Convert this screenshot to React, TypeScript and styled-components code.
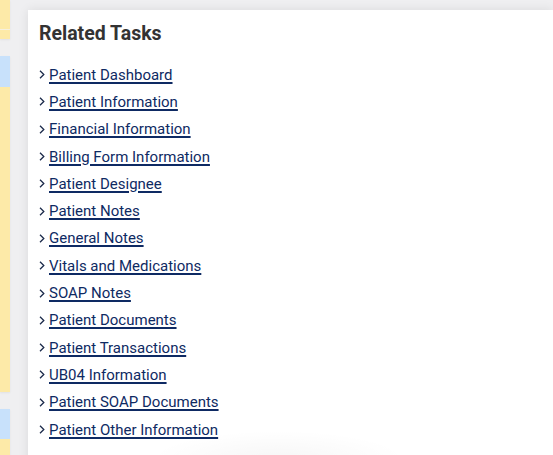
import React from 'react';
import styled, { createGlobalStyle } from 'styled-components';

const GlobalStyle = createGlobalStyle`
  html, body {
    margin: 0;
    padding: 0;
    background: #efeff1;
    font-family: Roboto, "Liberation Sans", Arial, sans-serif;
    overflow: hidden;
  }
`;

const Page = styled.div`
  display: flex;
  align-items: flex-start;
  gap: 18px;
  width: 553px;
  height: 455px;
  overflow: hidden;
`;

const SideColumn = styled.div`
  width: 10px;
  flex-shrink: 0;
  display: flex;
  flex-direction: column;
  gap: 17px;
`;

const SideCard = styled.div`
  display: flex;
  flex-direction: column;
  box-shadow: 0 1px 2px rgba(0, 0, 0, 0.06);
`;

const SideBlock = styled.div<{ tone: 'yellow' | 'blue'; h: number; divider?: boolean }>`
  height: ${p => p.h}px;
  background: ${p => (p.tone === 'yellow' ? '#fdeaa8' : '#c8e1fb')};
  border-bottom: ${p => (p.divider ? '1px solid #f6f0de' : 'none')};
`;

const Card = styled.div`
  position: relative;
  flex: 1;
  margin-top: 10px;
  min-height: 460px;
  background: #ffffff;
  box-shadow: 0 0 10px rgba(0, 0, 0, 0.09);
  padding: 0 0 0 11px;
`;

const Title = styled.h2`
  margin: 0;
  padding-top: 12px;
  font-size: 19.5px;
  font-weight: 700;
  line-height: 24px;
  color: #333333;
`;

const TaskList = styled.ul`
  list-style: none;
  margin: 15px 0 0 0;
  padding: 0;
`;

const TaskItem = styled.li`
  display: flex;
  align-items: center;
  height: 27.3px;
`;

const Chevron = styled.svg`
  width: 6px;
  height: 9px;
  margin-right: 4px;
  flex-shrink: 0;
`;

const TaskLink = styled.a`
  font-size: 15px;
  line-height: 20px;
  color: #0e2a63;
  text-decoration: underline;
  text-decoration-thickness: 1.5px;
  text-underline-offset: 2px;
  cursor: pointer;
`;

const BottomGlow = styled.div`
  position: absolute;
  left: 120px;
  bottom: -20px;
  width: 260px;
  height: 60px;
  background: radial-gradient(ellipse at center, rgba(0, 0, 0, 0.035), rgba(0, 0, 0, 0) 70%);
  pointer-events: none;
`;

const tasks = [
  'Patient Dashboard',
  'Patient Information',
  'Financial Information',
  'Billing Form Information',
  'Patient Designee',
  'Patient Notes',
  'General Notes',
  'Vitals and Medications',
  'SOAP Notes',
  'Patient Documents',
  'Patient Transactions',
  'UB04 Information',
  'Patient SOAP Documents',
  'Patient Other Information',
];

const App: React.FC = () => (
  <>
    <GlobalStyle />
    <Page>
      <SideColumn>
        <SideCard>
          <SideBlock tone="yellow" h={29} divider />
          <SideBlock tone="yellow" h={9} />
        </SideCard>
        <SideCard>
          <SideBlock tone="blue" h={31} />
          <SideBlock tone="yellow" h={305} />
        </SideCard>
        <SideCard>
          <SideBlock tone="blue" h={30} />
          <SideBlock tone="yellow" h={40} />
        </SideCard>
      </SideColumn>
      <Card>
        <Title>Related Tasks</Title>
        <TaskList>
          {tasks.map(t => (
            <TaskItem key={t}>
              <Chevron viewBox="0 0 6 9">
                <polyline points="1,0.8 4.8,4.5 1,8.2" fill="none" stroke="#1b2a4a" strokeWidth="1.3" />
              </Chevron>
              <TaskLink>{t}</TaskLink>
            </TaskItem>
          ))}
        </TaskList>
        <BottomGlow />
      </Card>
    </Page>
  </>
);

export default App;
